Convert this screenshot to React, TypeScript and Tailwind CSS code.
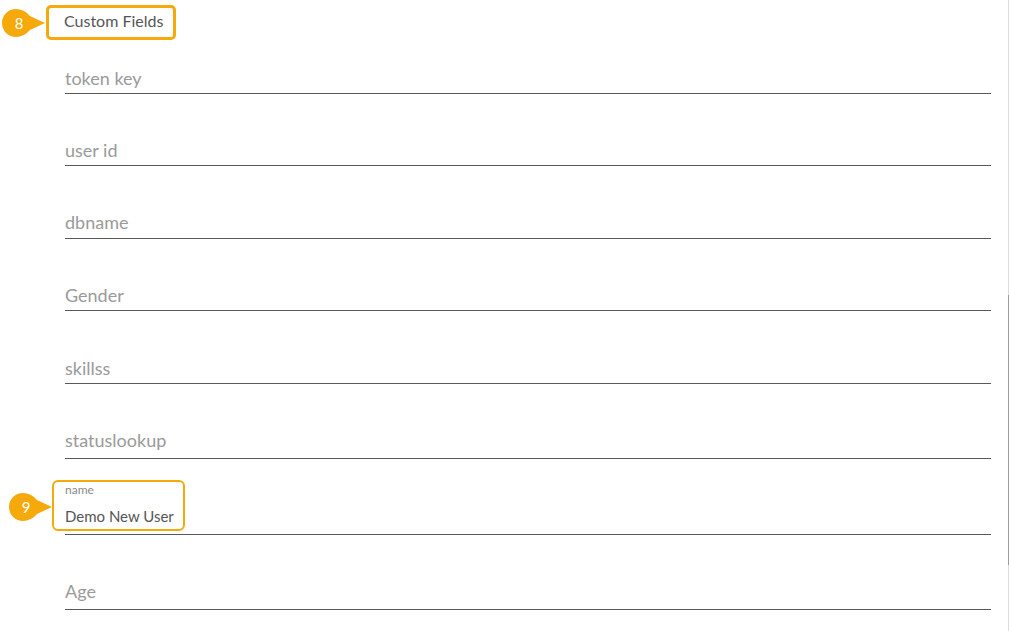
const fields = [
  { label: 'token key', h: 'h-[36px]', pb: 'pb-[3px]' },
  { label: 'user id', h: 'h-[72px]', pb: 'pb-[3px]' },
  { label: 'dbname', h: 'h-[73px]', pb: 'pb-[4px]' },
  { label: 'Gender', h: 'h-[72px]', pb: 'pb-[3px]' },
  { label: 'skillss', h: 'h-[73px]', pb: 'pb-[3px]' },
  { label: 'statuslookup', h: 'h-[75px]', pb: 'pb-[6px]' },
]

function Marker({ n }: { n: string }) {
  return (
    <div className="relative h-[30px] w-[45px]">
      <svg width="45" height="30" viewBox="0 0 45 30" className="absolute inset-0">
        <path d="M15 1 A14 14 0 0 0 15 29 Q23 29 29 22 L44 15 L29 8 Q23 1 15 1 Z" fill="#f6a90b" />
      </svg>
      <span className="absolute left-[3px] top-0 flex h-[30px] w-[30px] items-center justify-center text-[15px] text-white">
        {n}
      </span>
    </div>
  )
}

export default function App() {
  return (
    <div className="flex h-[631px] w-[1009px] overflow-hidden bg-white font-['Lato',sans-serif]">
      <div className="flex-1">
        <div className="flex items-start pt-[5px]">
          <div className="ml-[1px] mt-[3px]">
            <Marker n="8" />
          </div>
          <div className="flex h-[35px] w-[130px] items-center rounded-[5px] border-[3px] border-[#f6a90b] pb-[3px] pl-[15px] text-[16px] text-[#555]">
            Custom Fields
          </div>
        </div>
        <div className="mt-[18px] pl-[65px] pr-[17px]">
          {fields.map((f) => (
            <div key={f.label} className={`flex items-end border-b border-[#5a5a5a] ${f.pb} ${f.h}`}>
              <span className="text-[18px] leading-[24px] text-[#9a9a9a]">{f.label}</span>
            </div>
          ))}
          <div className="relative flex h-[76px] flex-col justify-end border-b border-[#5a5a5a] pb-[8px]">
            <span className="text-[12px] leading-[14px] text-[#8a8a8a]">name</span>
            <span className="mt-[9px] text-[15px] leading-[20px] text-[#555]">Demo New User</span>
            <div className="pointer-events-none absolute left-[-13px] top-[21px] h-[51px] w-[133px] rounded-[6px] border-2 border-[#f6a90b]" />
            <div className="absolute left-[-57px] top-[33px]">
              <Marker n="9" />
            </div>
          </div>
          <div className="flex h-[75px] items-end border-b border-[#5a5a5a] pb-[6px]">
            <span className="text-[18px] leading-[24px] text-[#9a9a9a]">Age</span>
          </div>
        </div>
      </div>
      <div className="flex w-px flex-col">
        <div className="h-[295px] bg-[#dcdcdc]" />
        <div className="h-[270px] bg-[#9c9c9c]" />
        <div className="flex-1 bg-[#dcdcdc]" />
      </div>
    </div>
  )
}
